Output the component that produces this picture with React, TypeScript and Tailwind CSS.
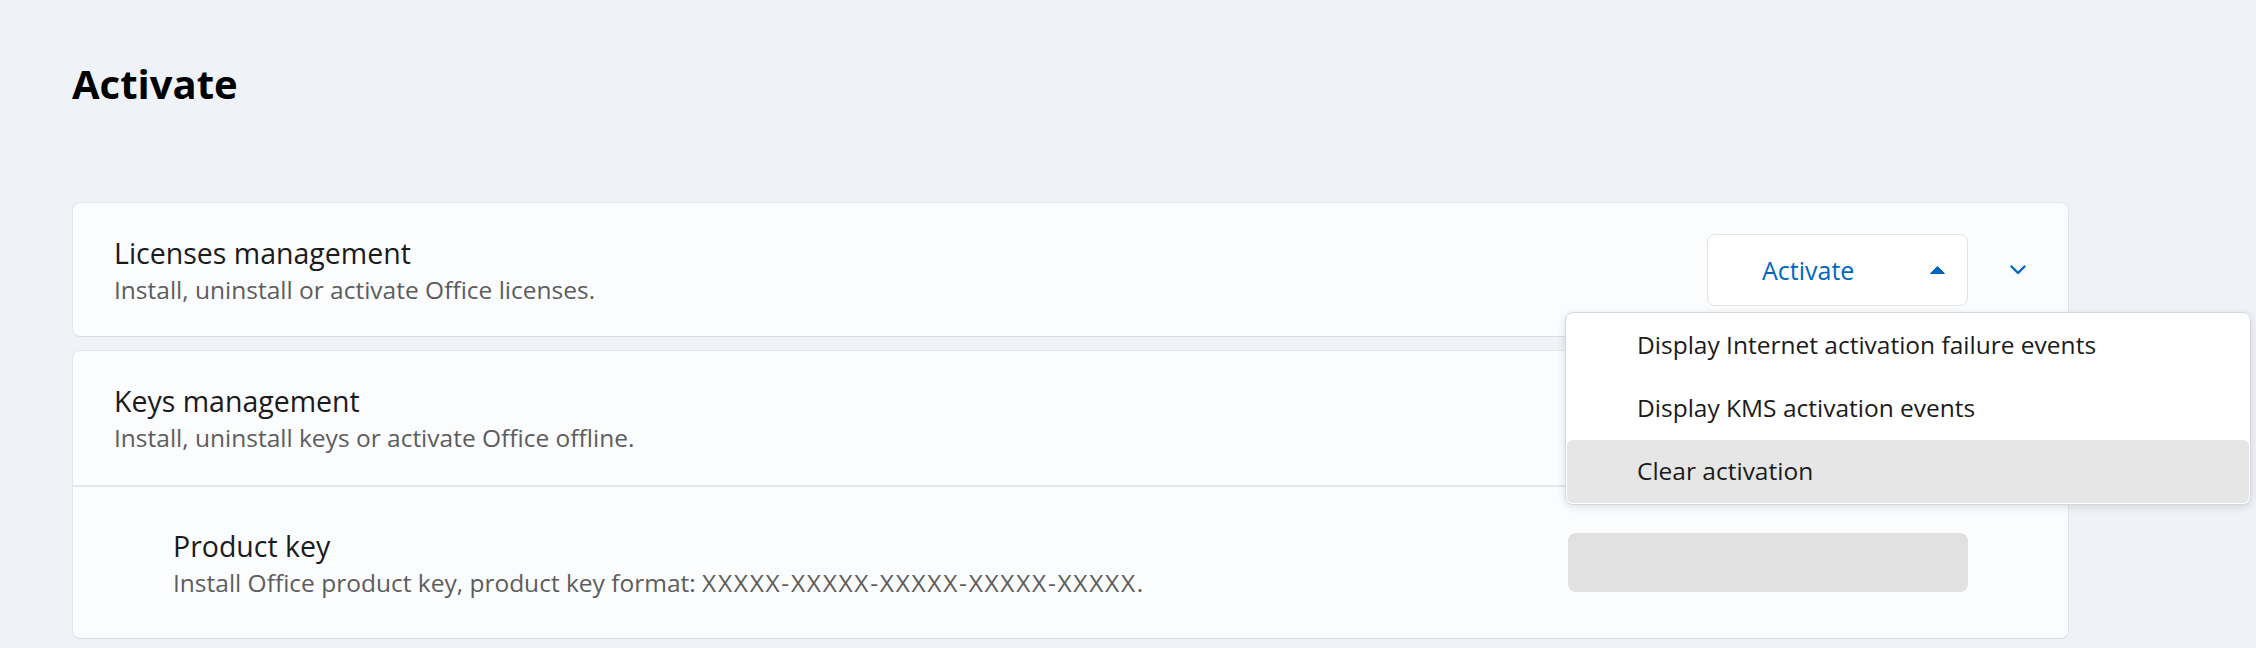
import React from "react";

const font = { fontFamily: '"Open Sans", "Noto Sans", sans-serif' };

function Chevron() {
  return (
    <svg width="16" height="10" viewBox="0 0 16 10" fill="none">
      <polyline points="1.5,1.5 8,8 14.5,1.5" stroke="#0067c0" strokeWidth="2.4" strokeLinecap="round" strokeLinejoin="round" />
    </svg>
  );
}

function Caret() {
  return (
    <svg width="15" height="8" viewBox="0 0 15 8">
      <polygon points="0.5,7.5 7.5,0.5 14.5,7.5" fill="#0067c0" stroke="#0067c0" strokeWidth="1" strokeLinejoin="round" />
    </svg>
  );
}

function TextBlock({ title, sub }: { title: string; sub: React.ReactNode }) {
  return (
    <div className="flex flex-col">
      <div className="text-[28.5px] leading-[40px] text-[#1b1b1b]">{title}</div>
      <div className="text-[24.5px] leading-[34px] text-[#5d5d5d]">{sub}</div>
    </div>
  );
}

export default function App() {
  return (
    <div className="relative w-full h-[648px] bg-[#eff3f7] px-[72px] overflow-hidden" style={font}>
      <div className="pt-[60px] h-[108px]">
        <div className="text-[40px] leading-[48px] font-bold text-black">Activate</div>
      </div>

      <div className="mt-[94px] flex flex-col gap-[13px] w-[1997px]">
        {/* Card 1 */}
        <div className="h-[135px] rounded-[8px] border border-[#e2e5e9] border-b-[#d9dce0] bg-[#fbfcfd] flex items-center pl-[41px]">
          <div className="flex-1">
            <TextBlock title="Licenses management" sub="Install, uninstall or activate Office licenses." />
          </div>
          <div className="w-[261px] h-[72px] rounded-[8px] border border-[#e3e3e3] bg-white flex items-center pl-[54px] pr-[22px]">
            <span className="text-[25px] text-[#0067c0] leading-[34px]">Activate</span>
            <span className="ml-auto flex items-center"><Caret /></span>
          </div>
          <div className="w-[100px] flex items-center justify-center">
            <Chevron />
          </div>
        </div>

        {/* Card 2 */}
        <div className="h-[289px] rounded-[8px] border border-[#e2e5e9] border-b-[#d9dce0] bg-[#fbfcfd] flex flex-col">
          <div className="h-[134px] flex items-center pl-[41px]">
            <TextBlock title="Keys management" sub="Install, uninstall keys or activate Office offline." />
          </div>
          <div className="h-[2px] bg-[#e6e7e9]" />
          <div className="flex-1 flex items-center pl-[100px] pr-[100px]">
            <div className="flex-1">
              <TextBlock
                title="Product key"
                sub={
                  <>
                    Install Office product key, product key format:{" "}
                    <span className="tracking-[1.7px]">XXXXX-XXXXX-XXXXX-XXXXX-XXXXX.</span>
                  </>
                }
              />
            </div>
            <div className="w-[400px] h-[59px] rounded-[8px] bg-[#e1e1e1]" />
          </div>
        </div>
      </div>

      {/* Dropdown menu */}
      <div className="absolute left-[1565px] top-[312px] w-[686px] rounded-[8px] border border-[#d6d8db] bg-white p-[1px] shadow-[0_2px_8px_rgba(0,0,0,0.12)]">
        {["Display Internet activation failure events", "Display KMS activation events", "Clear activation"].map((t, i) => (
          <div
            key={t}
            className={
              i === 2
                ? "h-[63px] flex items-center pl-[70px] rounded-[6px] bg-[#e6e6e6] text-[24.5px] text-[#1b1b1b]"
                : "h-[63px] flex items-center pl-[70px] rounded-[6px] text-[24.5px] text-[#1b1b1b]"
            }
          >
            {t}
          </div>
        ))}
      </div>
    </div>
  );
}
